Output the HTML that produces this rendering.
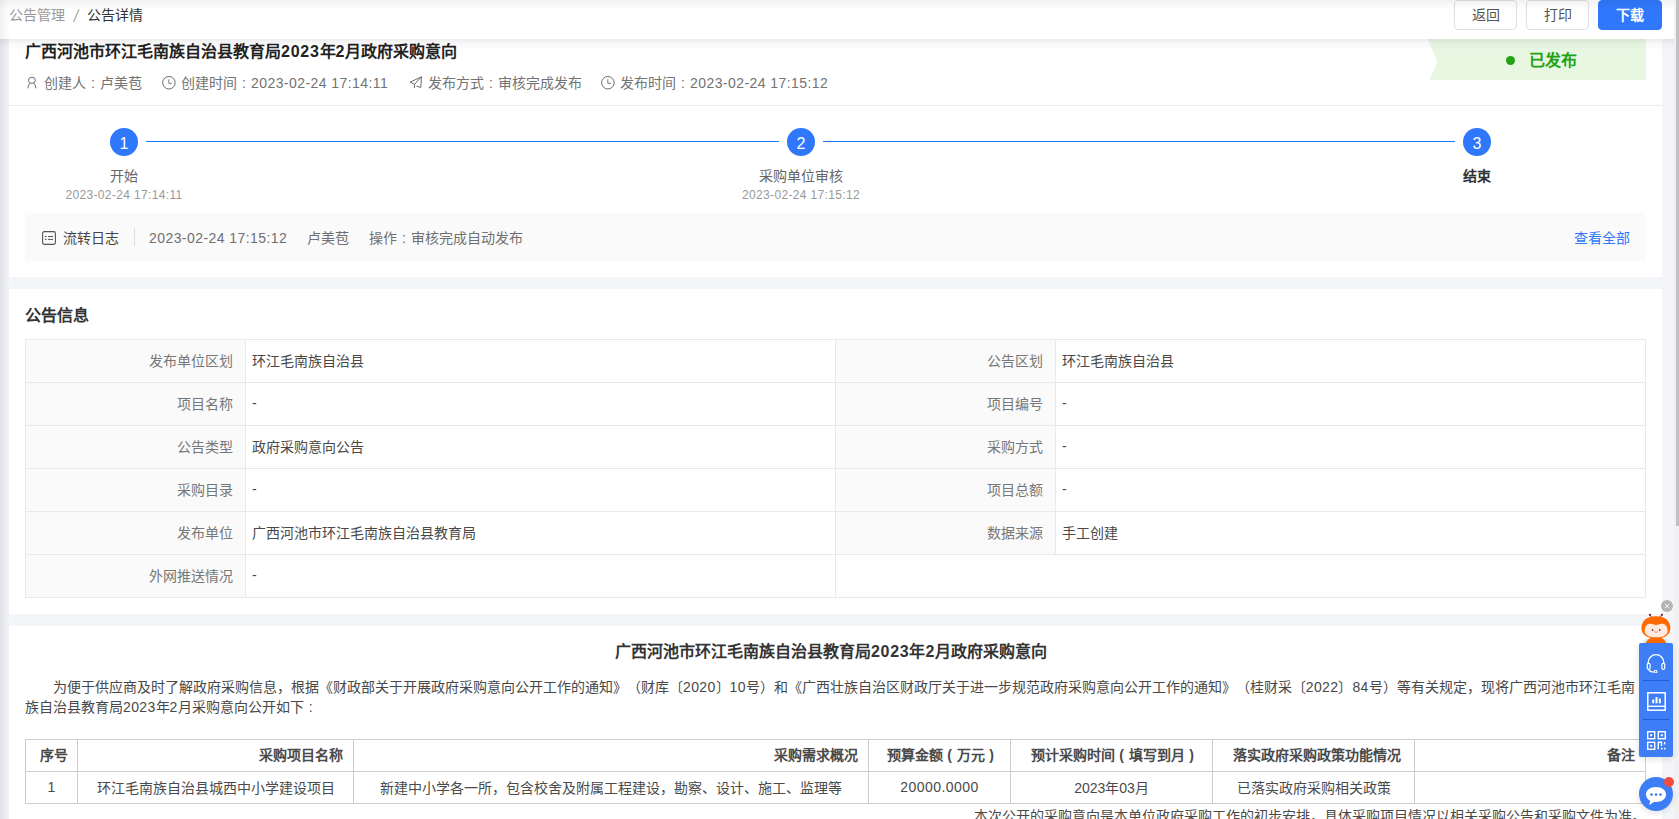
<!DOCTYPE html>
<html lang="zh-CN">
<head>
<meta charset="utf-8">
<style>
*{box-sizing:border-box;margin:0;padding:0}
html,body{width:1679px;height:819px;overflow:hidden}
body{position:relative;text-spacing-trim:space-all;background:#f4f5f9;font-family:"Liberation Sans",sans-serif;font-size:14px;color:#333}
.a{position:absolute;white-space:nowrap}
.card{position:absolute;background:#fff}
.cl{display:inline-block;width:14px;text-align:center}
.n{letter-spacing:.43px}
.n2{letter-spacing:.35px}
.hdr{position:absolute;left:0;top:0;width:1674px;height:39px;background:#fff;z-index:5}
.btn{position:absolute;top:0;height:30px;width:63px;border:1px solid #dcdfe6;border-radius:4px;background:#fff;color:#555;font-size:14px;line-height:28px;text-align:center}
.btn.p{background:#2f77fb;border-color:#2f77fb;color:#fff;font-weight:bold}
.meta{color:#737373;font-size:14px;line-height:20px;top:73px}
.circ{position:absolute;width:28px;height:28px;border-radius:50%;background:#2f77fb;color:#fff;font-size:16px;line-height:32px;text-align:center;top:128px}
.sline{position:absolute;height:1px;background:#1d79ff;top:141px}
.stt{position:absolute;top:166px;font-size:14px;line-height:20px;color:#666;text-align:center;width:200px}
.std{position:absolute;top:187px;font-size:12px;line-height:16px;color:#999;text-align:center;width:200px;letter-spacing:.35px}
table.info{position:absolute;left:25px;top:339px;width:1620px;border-collapse:collapse;table-layout:fixed}
table.info td{height:43px;border:1px solid #e9e9e9;font-size:14px;color:#484848;padding:0 12px 2px 6px}
table.info td.l{background:#fafafa;color:#777;text-align:right;padding:0 12px 2px 0}
table.doc{position:absolute;left:25px;top:739px;width:1620px;border-collapse:collapse;table-layout:fixed}
table.doc td{white-space:nowrap;border:1px solid #cdcdcd;font-size:14px;color:#4a4a4a;height:32px;padding:0 10px 2px;text-align:center}
table.doc tr.h td{font-weight:bold;padding:0 10px 3px 16px}
.pp{display:inline-block;width:14px;text-align:center}
</style>
</head>
<body>
<!-- header -->
<div class="hdr">
  <div class="a" style="left:9px;top:5px;line-height:20px;font-size:14px;color:#999">公告管理<span style="display:inline-block;width:22px;vertical-align:top;height:20px;position:relative"><svg style="position:absolute;left:0;top:0" width="22" height="20" viewBox="0 0 22 20"><path d="M14 4.3 L8.6 17" stroke="#b0b0b0" stroke-width="1.4"/></svg></span><span style="color:#333">公告详情</span></div>
  <div class="btn" style="left:1454px">返回</div>
  <div class="btn" style="left:1526px">打印</div>
  <div class="btn p" style="left:1598px;width:64px">下载</div>
</div>
<div class="a" style="left:0;top:0;width:1674px;height:10px;background:linear-gradient(rgba(0,0,0,.05),rgba(0,0,0,0));z-index:6"></div>
<div class="a" style="left:0;top:39px;width:9px;height:780px;background:linear-gradient(90deg,#dfe1e6,#eceef2 60%,#f2f3f7)"></div>
<div class="a" style="left:0;top:39px;width:1674px;height:11px;background:linear-gradient(rgba(0,0,0,.075),rgba(0,0,0,.03) 35%,rgba(0,0,0,0));z-index:6"></div>
<div class="a" style="left:0;top:0;width:10px;height:39px;background:linear-gradient(90deg,rgba(0,0,0,.055),rgba(0,0,0,.02) 60%,rgba(0,0,0,0));z-index:6"></div>
<!-- scrollbar -->
<div class="a" style="left:1674px;top:0;width:5px;height:819px;background:#f1f1f1"></div>
<div class="a" style="left:1676px;top:0;width:3px;height:526px;background:#c1c1c1"></div>

<!-- card 1 -->
<div class="card" style="left:9px;top:0;width:1653px;height:277px">
</div>
<div class="a" style="left:25px;top:42px;font-size:16px;line-height:20px;font-weight:bold;color:#222">广西河池市环江毛南族自治县教育局<span style="letter-spacing:.75px">2023</span>年<span style="letter-spacing:.75px">2</span>月政府采购意向</div>
<!-- status tag -->
<div class="a" style="left:1427px;top:39px;width:219px;height:41px;background:#e7f7e2;clip-path:polygon(0.5px 0,100% 0,100% 100%,2.4px 100%,10.4px 22.8px)"></div>
<div class="a" style="left:1506px;top:56px;width:9px;height:9px;border-radius:50%;background:#23a213"></div>
<div class="a" style="left:1529px;top:51px;font-size:16px;line-height:20px;color:#23a213;font-weight:bold">已发布</div>

<!-- meta row -->
<svg class="a" style="left:27px;top:76px" width="11" height="13" viewBox="0 0 11 13"><ellipse cx="4.9" cy="4.3" rx="3.4" ry="3.1" fill="none" stroke="#6a6a6a" stroke-width="1"/><path d="M0.8 12.3 Q1.3 8.8 3 7.2 M9 12.3 Q8.5 8.8 6.8 7.2" fill="none" stroke="#6a6a6a" stroke-width="1"/></svg>
<div class="a meta" style="left:44px">创建人<span class="cl">:</span>卢美苞</div>
<svg class="a" style="left:162px;top:76px" width="14" height="14" viewBox="0 0 14 14"><circle cx="6.9" cy="6.75" r="6.25" fill="none" stroke="#6a6a6a" stroke-width="1"/><path d="M6.8 3.3 V7.3 H10" fill="none" stroke="#6a6a6a" stroke-width="0.9"/></svg>
<div class="a meta" style="left:181px">创建时间<span class="cl">:</span><span class="n">2023-02-24 17:14:11</span></div>
<svg class="a" style="left:409px;top:76px" width="14" height="14" viewBox="0 0 14 14"><path d="M12.4 0.8 L1.2 6.2 L5.6 8.3 Z M12.4 0.8 L11.8 11.4 L7.5 10.2 M5.6 8.3 L5.4 12" fill="none" stroke="#6a6a6a" stroke-width="1" stroke-linejoin="round"/></svg>
<div class="a meta" style="left:428px">发布方式<span class="cl">:</span>审核完成发布</div>
<svg class="a" style="left:601px;top:76px" width="14" height="14" viewBox="0 0 14 14"><circle cx="6.9" cy="6.75" r="6.25" fill="none" stroke="#6a6a6a" stroke-width="1"/><path d="M6.8 3.3 V7.3 H10" fill="none" stroke="#6a6a6a" stroke-width="0.9"/></svg>
<div class="a meta" style="left:620px">发布时间<span class="cl">:</span><span class="n">2023-02-24 17:15:12</span></div>

<div class="a" style="left:9px;top:105px;width:1653px;height:1px;background:#ebebeb"></div>

<!-- steps -->
<div class="circ" style="left:110px">1</div>
<div class="circ" style="left:787px">2</div>
<div class="circ" style="left:1463px">3</div>
<div class="sline" style="left:146px;width:633px"></div>
<div class="sline" style="left:823px;width:632px"></div>
<div class="stt" style="left:24px">开始</div>
<div class="std" style="left:24px">2023-02-24 17:14:11</div>
<div class="stt" style="left:701px">采购单位审核</div>
<div class="std" style="left:701px">2023-02-24 17:15:12</div>
<div class="stt" style="left:1377px;color:#333;font-weight:bold">结束</div>

<!-- log -->
<div class="a" style="left:25px;top:213px;width:1621px;height:48px;background:#fafafa"></div>
<svg class="a" style="left:42px;top:231px" width="14" height="14" viewBox="0 0 14 14"><rect x="0.6" y="0.6" width="12.8" height="12.8" rx="1.6" fill="none" stroke="#555" stroke-width="1.1"/><path d="M2.8 5.5H4.7M6 5.5H11M2.8 8.4H4.7M6 8.4H11" stroke="#555" stroke-width="1"/></svg>
<div class="a" style="left:63px;top:228px;line-height:20px;color:#444">流转日志</div>
<div class="a" style="left:134px;top:228px;width:1px;height:18px;background:#ddd"></div>
<div class="a n" style="left:149px;top:228px;line-height:20px;color:#707070">2023-02-24 17:15:12</div>
<div class="a" style="left:307px;top:228px;line-height:20px;color:#707070">卢美苞</div>
<div class="a" style="left:369px;top:228px;line-height:20px;color:#707070">操作<span class="cl">:</span>审核完成自动发布</div>
<div class="a" style="left:1574px;top:228px;line-height:20px;color:#2f77fb">查看全部</div>

<!-- card 2 -->
<div class="card" style="left:9px;top:289px;width:1653px;height:325px"></div>
<div class="a" style="left:25px;top:306px;font-size:16px;line-height:20px;font-weight:bold;color:#333">公告信息</div>
<table class="info">
<colgroup><col style="width:220px"><col style="width:590px"><col style="width:220px"><col style="width:590px"></colgroup>
<tr><td class="l">发布单位区划</td><td>环江毛南族自治县</td><td class="l">公告区划</td><td>环江毛南族自治县</td></tr>
<tr><td class="l">项目名称</td><td>-</td><td class="l">项目编号</td><td>-</td></tr>
<tr><td class="l">公告类型</td><td>政府采购意向公告</td><td class="l">采购方式</td><td>-</td></tr>
<tr><td class="l">采购目录</td><td>-</td><td class="l">项目总额</td><td>-</td></tr>
<tr><td class="l">发布单位</td><td>广西河池市环江毛南族自治县教育局</td><td class="l">数据来源</td><td>手工创建</td></tr>
<tr><td class="l">外网推送情况</td><td>-</td><td colspan="2"></td></tr>
</table>

<!-- card 3 -->
<div class="card" style="left:9px;top:626px;width:1653px;height:193px"></div>
<div class="a" style="left:0;width:1662px;top:642px;text-align:center;font-size:16px;line-height:20px;font-weight:bold;color:#333">广西河池市环江毛南族自治县教育局<span style="letter-spacing:.75px">2023</span>年<span style="letter-spacing:.75px">2</span>月政府采购意向</div>
<div class="a" style="left:53px;top:677px;line-height:20px;color:#484848">为便于供应商及时了解政府采购信息，根据《财政部关于开展政府采购意向公开工作的通知》（财库〔<span class="n2">2020</span>〕<span class="n2">10</span>号）和《广西壮族自治区财政厅关于进一步规范政府采购意向公开工作的通知》（桂财采〔<span class="n2">2022</span>〕<span class="n2">84</span>号）等有关规定，现将广西河池市环江毛南</div>
<div class="a" style="left:25px;top:697px;line-height:20px;color:#484848">族自治县教育局<span class="n2">2023</span>年<span class="n2">2</span>月采购意向公开如下<span class="cl">:</span></div>
<table class="doc">
<colgroup><col style="width:52px"><col style="width:276px"><col style="width:515px"><col style="width:142px"><col style="width:202px"><col style="width:202px"><col style="width:231px"></colgroup>
<tr class="h"><td style="padding:0 0 3px 4px">序号</td><td style="text-align:right">采购项目名称</td><td style="text-align:right">采购需求概况</td><td>预算金额<span class="pp">(</span>万元<span class="pp">)</span></td><td>预计采购时间<span class="pp">(</span>填写到月<span class="pp">)</span></td><td>落实政府采购政策功能情况</td><td style="text-align:right">备注</td></tr>
<tr><td>1</td><td>环江毛南族自治县城西中小学建设项目</td><td>新建中小学各一所，包含校舍及附属工程建设，勘察、设计、施工、监理等</td><td><span class="n">20000.0000</span></td><td>2023年03月</td><td>已落实政府采购相关政策</td><td></td></tr>
</table>
<div class="a" style="left:0;width:1646px;top:806px;text-align:right;line-height:20px;color:#484848">本次公开的采购意向是本单位政府采购工作的初步安排，具体采购项目情况以相关采购公告和采购文件为准。</div>

<!-- floating widget -->
<svg class="a" style="left:1660px;top:599px" width="14" height="14" viewBox="0 0 14 14"><circle cx="7" cy="7" r="6" fill="#b4b4b4"/><path d="M4.8 4.8L9.2 9.2M9.2 4.8L4.8 9.2" stroke="#f4f4f4" stroke-width="1"/></svg>
<svg class="a" style="left:1638px;top:612px" width="36" height="32" viewBox="0 0 36 32">
  <path d="M5 31 Q6 26.5 10 26.5 L26 26.5 Q30 26.5 31 31Z" fill="#d6f0f6"/>
  <path d="M7.7 31 Q10 26.5 13 26 L23 26 Q26 26.5 28.3 31Z" fill="#ff6a00"/>
  <path d="M14.6 6.5 L12.2 3 M21.4 6.5 L23.6 3" stroke="#8b2f1c" stroke-width="1"/>
  <circle cx="11.9" cy="2.8" r="1.1" fill="#7a1f2a"/><circle cx="23.9" cy="2.8" r="1.1" fill="#7a1f2a"/>
  <path d="M3.4 16 C3.4 8.5 9.5 4.2 18 4.2 C26.5 4.2 32.4 8.5 32.4 16 C32.4 22.5 27 26.6 18 26.6 C9 26.6 3.4 22.5 3.4 16Z" fill="#ff6a00"/>
  <path d="M6.7 19 C6.7 14 9.5 11.6 12.5 11.8 Q15 12 18.1 13.3 Q21 12 23.7 11.8 C26.8 11.6 29.6 14 29.6 19 C29.6 23.2 25 25.3 18.1 25.3 C11.2 25.3 6.7 23.2 6.7 19Z" fill="#fde9dd"/>
  <circle cx="14.6" cy="18" r="0.9" fill="#8a3a30"/><circle cx="21.7" cy="18" r="0.9" fill="#8a3a30"/>
  <path d="M16.3 19.6 Q18.1 21 19.9 19.6" fill="none" stroke="#c9867a" stroke-width="0.9"/>
</svg>
<div class="a" style="left:1639px;top:643px;width:34px;height:114px;background:#3d7ef6;border-radius:2px;box-shadow:0 2px 6px rgba(0,0,0,.12)"></div>
<div class="a" style="left:1643px;top:680px;width:26px;height:1px;background:#1f5fd6"></div>
<div class="a" style="left:1643px;top:719px;width:26px;height:1px;background:#1f5fd6"></div>
<svg class="a" style="left:1646px;top:653px" width="20" height="20" viewBox="0 0 20 20">
  <path d="M2.2 11 V9.5 A7.8 7.8 0 0 1 17.8 9.5 V11" fill="none" stroke="#fff" stroke-width="1.3"/>
  <rect x="1.3" y="10.3" width="2.8" height="6" rx="1.2" fill="none" stroke="#fff" stroke-width="1.2"/>
  <rect x="15.9" y="10.3" width="2.8" height="6" rx="1.2" fill="none" stroke="#fff" stroke-width="1.2"/>
  <path d="M2.8 16.5 Q3.5 19 8 19" fill="none" stroke="#fff" stroke-width="1.2"/>
  <circle cx="9.6" cy="18.6" r="1.4" fill="none" stroke="#fff" stroke-width="1.1"/>
</svg>
<svg class="a" style="left:1647px;top:692px" width="19" height="19" viewBox="0 0 19 19">
  <rect x="0.8" y="0.8" width="17.4" height="17.4" fill="none" stroke="#fff" stroke-width="1.5"/>
  <path d="M0.8 14.3 H18.2" stroke="#fff" stroke-width="1.4"/>
  <rect x="5.2" y="7.5" width="2" height="3.8" fill="#fff"/><rect x="8.5" y="5" width="2" height="6.3" fill="#fff"/><rect x="11.8" y="6.5" width="2" height="4.8" fill="#fff"/>
</svg>
<svg class="a" style="left:1647px;top:731px" width="19" height="19" viewBox="0 0 19 19">
  <rect x="0.7" y="0.7" width="7" height="7" fill="none" stroke="#fff" stroke-width="1.4"/><rect x="3.2" y="3.2" width="2" height="2" fill="#fff"/>
  <rect x="11.3" y="0.7" width="7" height="7" fill="none" stroke="#fff" stroke-width="1.4"/><rect x="13.8" y="3.2" width="2" height="2" fill="#fff"/>
  <rect x="0.7" y="11.3" width="7" height="7" fill="none" stroke="#fff" stroke-width="1.4"/><rect x="3.2" y="13.8" width="2" height="2" fill="#fff"/>
  <path d="M11.3 18.3 V11.3 H14.5 V15 M17.6 11 V13.5" fill="none" stroke="#fff" stroke-width="1.4"/>
  <rect x="14" y="16.8" width="1.6" height="1.6" fill="#fff"/><rect x="17" y="16.8" width="1.6" height="1.6" fill="#fff"/>
</svg>
<div class="a" style="left:1639px;top:777px;width:34px;height:34px;border-radius:50%;background:#3d7ef6;box-shadow:0 2px 6px rgba(0,0,0,.12)"></div>
<svg class="a" style="left:1645px;top:786px" width="22" height="20" viewBox="0 0 22 20">
  <path d="M11 1 C5 1 1 4.3 1 8.6 C1 11.5 2.8 13.6 5.2 14.8 L4.2 19 L9 15.9 C9.7 16 10.3 16.1 11 16.1 C17 16.1 21 12.8 21 8.6 C21 4.3 17 1 11 1Z" fill="#fff"/>
  <circle cx="6.5" cy="8.6" r="1.3" fill="#3d7ef6"/><circle cx="11" cy="8.6" r="1.3" fill="#3d7ef6"/><circle cx="15.5" cy="8.6" r="1.3" fill="#3d7ef6"/>
</svg>
<div class="a" style="left:1664px;top:777px;width:10px;height:10px;border-radius:50%;background:#f24c3d"></div>
</body>
</html>
